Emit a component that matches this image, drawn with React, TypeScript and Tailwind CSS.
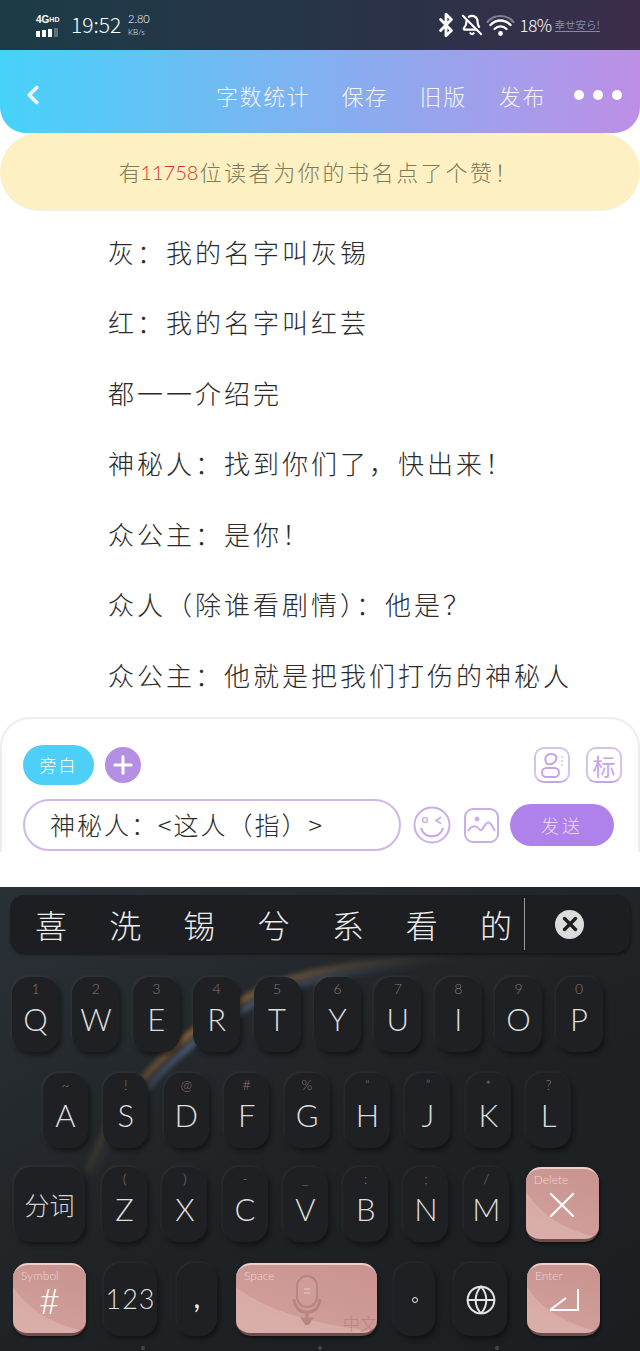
import { ReactNode } from 'react';
import { Bluetooth, BellOff, ChevronLeft, Globe, Plus, X } from 'lucide-react';

const hand = "font-['Noto_Sans_CJK_SC',sans-serif] font-extralight";

const lines = [
  '灰：我的名字叫灰锡',
  '红：我的名字叫红芸',
  '都一一介绍完',
  '神秘人：找到你们了，快出来！',
  '众公主：是你！',
  '众人（除谁看剧情）：他是？',
  '众公主：他就是把我们打伤的神秘人',
];

const candidates = ['喜', '洗', '锡', '兮', '系', '看', '的'];

const row1 = [
  ['Q', '1'], ['W', '2'], ['E', '3'], ['R', '4'], ['T', '5'],
  ['Y', '6'], ['U', '7'], ['I', '8'], ['O', '9'], ['P', '0'],
];
const row2 = [
  ['A', '~'], ['S', '!'], ['D', '@'], ['F', '#'], ['G', '%'],
  ['H', '“'], ['J', '”'], ['K', '*'], ['L', '?'],
];
const row3 = [
  ['Z', '('], ['X', ')'], ['C', '-'], ['V', '_'], ['B', ':'], ['N', ';'], ['M', '/'],
];

function Key({ letter, sub, className, children }: { letter?: string; sub?: string; className: string; children?: ReactNode }) {
  return (
    <div className={`relative shrink-0 h-full flex flex-col items-center rounded-[17px] bg-[#1e2023] shadow-[2px_3px_5px_rgba(0,0,0,0.45),-1px_-1px_3px_rgba(255,255,255,0.07)] ${className}`}>
      {sub !== undefined && <span className="mt-[2px] h-[20px] text-[14px] leading-[20px] font-light text-[#8a7774]">{sub}</span>}
      {letter && <span className="mt-[1px] text-[31px] leading-[38px] font-light text-[#dedede]">{letter}</span>}
      {children}
    </div>
  );
}

function PinkKey({ label, className, children }: { label: string; className: string; children?: ReactNode }) {
  return (
    <div className={`relative shrink-0 h-full overflow-hidden rounded-[15px] bg-[linear-gradient(200deg,#c9938f,#d2a19d)] border-t-2 border-t-[#ecd0cc] border-b-[3px] border-b-[#6d4c4a] shadow-[1px_2px_3px_rgba(0,0,0,0.5)] ${className}`}>
      <svg className="absolute inset-0 w-full h-full" viewBox="0 0 100 100" preserveAspectRatio="none">
        <path d="M0 32 Q30 82 100 98 L100 100 L0 100 Z" fill="#e6c3bf" opacity="0.4" />
      </svg>
      <span className="absolute left-[8px] top-[2px] text-[12px] font-light text-[#ecd6d3]">{label}</span>
      <div className="absolute inset-0 flex items-center justify-center">{children}</div>
    </div>
  );
}

export default function App() {
  return (
    <div className="w-[640px] h-[1351px] overflow-hidden flex flex-col bg-white font-['Lato',sans-serif]">
      {/* status bar */}
      <div className="h-[50px] shrink-0 flex items-center justify-between pl-[36px] pr-[40px] bg-[linear-gradient(90deg,#1c3b47,#2b3248_65%,#3c2d4c)] text-white">
        <div className="flex items-center">
          <div className="w-[27px]">
            <div className="text-[10px] leading-[11px] font-bold font-['Liberation_Sans',sans-serif] whitespace-nowrap">4G<span className="text-[7px] align-top">HD</span></div>
            <div className="flex items-end gap-[2px] mt-[3px] h-[9px]">
              <div className="w-[4px] h-[6px] bg-white" />
              <div className="w-[4px] h-[7px] bg-white" />
              <div className="w-[4px] h-[8px] bg-white" />
              <div className="w-[4px] h-[9px] bg-[#5d7177]" />
            </div>
          </div>
          <span className={`ml-[8px] w-[49px] text-[21px] ${hand}`}>19:52</span>
          <div className="ml-[8px] flex flex-col items-start">
            <span className="text-[11px] leading-[14px] font-light">2.80</span>
            <span className="text-[8px] leading-[12px] font-light">KB/s</span>
          </div>
        </div>
        <div className="flex items-center">
          <Bluetooth className="w-[26px] h-[26px]" strokeWidth={2.6} />
          <BellOff className="ml-[2px] w-[22px] h-[22px]" strokeWidth={2.4} />
          <svg className="ml-[3px]" width="29" height="24" viewBox="0 0 29 24" fill="none" stroke="white" strokeLinecap="round">
            <path d="M1.5 9 C8 1 21 1 27.5 9" strokeWidth="2" stroke="#7f8294" />
            <path d="M4.5 12 C10 6 19 6 24.5 12" strokeWidth="2.4" />
            <path d="M8.5 16 C12 12.5 17 12.5 20.5 16" strokeWidth="2.4" />
            <circle cx="14.5" cy="20.5" r="2.4" fill="white" stroke="none" />
          </svg>
          <span className={`ml-[5px] w-[29px] text-[17px] tracking-[-0.5px] whitespace-nowrap ${hand}`}>18%</span>
          <span className="ml-[6px] text-[10.5px] leading-[13px] text-[#858aa5] border-b border-[#858aa5] font-['Noto_Sans_CJK_JP',sans-serif] whitespace-nowrap">幸せ安ら!</span>
        </div>
      </div>

      {/* title bar */}
      <div className="h-[83px] shrink-0 pt-[7px] flex items-center rounded-b-[26px] bg-[linear-gradient(90deg,#47d2f9,#90a8ee_62%,#bd8fe6)] text-[#f1f4ff]">
        <ChevronLeft className="ml-[18px] w-[30px] h-[30px]" strokeWidth={3} />
        <div className={`ml-auto flex items-center text-[22px] tracking-[1.6px] whitespace-nowrap ${hand}`}>
          <span>字数统计</span>
          <span className="ml-[31px]">保存</span>
          <span className="ml-[31px]">旧版</span>
          <span className="ml-[32px]">发布</span>
        </div>
        <div className="ml-[28px] mr-[18px] flex gap-[9px]">
          <div className="w-[10px] h-[10px] rounded-full bg-white" />
          <div className="w-[10px] h-[10px] rounded-full bg-white" />
          <div className="w-[10px] h-[10px] rounded-full bg-white" />
        </div>
      </div>

      {/* like banner */}
      <div className={`h-[78px] shrink-0 pr-[2px] flex items-center justify-center rounded-[40px] bg-[#fdf0c3] border-b border-[#efefef] text-[22px] tracking-[2.6px] text-[#7e7a5a] whitespace-nowrap ${hand}`}>
        有<span className="ml-[-3px] mr-[1px] text-[20px] text-[#d8332f] tracking-normal font-light font-['Lato',sans-serif]">11758</span>位读者为你的书名点了个赞！
      </div>

      {/* script lines */}
      <div className="flex-1 pt-[5px] pl-[108px]">
        {lines.map((line) => (
          <div key={line} className={`h-[70.5px] flex items-center text-[26px] tracking-[3px] text-[#2b2b2b] whitespace-nowrap ${hand}`}>
            {line}
          </div>
        ))}
      </div>

      {/* composer */}
      <div className="h-[135px] shrink-0 overflow-hidden rounded-t-[30px] border-t-2 border-x-2 border-[#ececf1] px-[21px] pt-[26px]">
        <div className="h-[40px] flex items-center">
          <div className={`w-[71px] h-[40px] rounded-full bg-[#4dcff7] text-white text-[17px] tracking-[2px] flex items-center justify-center ${hand}`}>旁白</div>
          <div className="ml-[11px] w-[36px] h-[36px] rounded-full bg-[#b58fe3] text-white flex items-center justify-center">
            <Plus className="w-[28px] h-[28px]" strokeWidth={2.6} />
          </div>
          <div className="ml-auto mr-[-5px] flex gap-[16px]">
            <div className="w-[36px] h-[36px] rounded-[10px] border-2 border-[#d6c2ee] border-b-[#c3a5e8] flex items-center justify-center">
              <svg width="26" height="28" viewBox="0 0 26 28" fill="none" stroke="#c3a5e8" strokeWidth="2">
                <path d="M8 13 C5 9 6 3 12 3 C17 3 18 6 17 9 C16 12 12 14 8 13 Z" />
                <rect x="3" y="17" width="17" height="9" rx="4.5" />
                <path d="M22 6h2M22 10h2M22 14h2" strokeWidth="1.2" />
              </svg>
            </div>
            <div className="w-[36px] h-[36px] rounded-[10px] border-2 border-[#d6c2ee] border-b-[#c3a5e8] flex items-center justify-center text-[23px] text-[#c3a5e8] font-['Noto_Sans_CJK_SC',sans-serif]">标</div>
          </div>
        </div>
        <div className="mt-[14px] flex items-center">
          <div className={`w-[378px] h-[52px] shrink-0 rounded-[26px] border-2 border-[#cfb8e8] pl-[25px] flex items-center text-[25px] tracking-[2px] text-[#2b2b2b] whitespace-nowrap ${hand}`}>神秘人：&lt;这人（指）&gt;</div>
          <svg className="ml-[12px] shrink-0" width="38" height="38" viewBox="0 0 38 38" fill="none" stroke="#c9aeea" strokeWidth="2">
            <circle cx="19" cy="19" r="17.5" />
            <circle cx="12" cy="14" r="2.4" strokeWidth="1.4" />
            <path d="M28 11 L23 14.5 L28 17.5" strokeWidth="1.6" />
            <path d="M8 22 C11 33 27 33 30 22" strokeWidth="2.4" />
          </svg>
          <svg className="ml-[13px] shrink-0" width="35" height="35" viewBox="0 0 35 35" fill="none" stroke="#c9aeea" strokeWidth="2">
            <rect x="1" y="1" width="33" height="33" rx="8" />
            <circle cx="13" cy="11" r="2.4" fill="#c9aeea" stroke="none" />
            <path d="M4 23 C8 17 12 17 15 21 C18 25 19 18 23 15 C26 13 28 18 31 23" />
          </svg>
          <div className={`ml-[11px] w-[104px] h-[42px] shrink-0 rounded-full bg-[#ae82ea] text-[#eadcf8] text-[18px] tracking-[3px] flex items-center justify-center ${hand}`}>发送</div>
        </div>
      </div>
      <div className="h-[35px] shrink-0 bg-white" />

      {/* keyboard */}
      <div className="relative h-[464px] shrink-0 overflow-hidden flex flex-col bg-[linear-gradient(150deg,#2a3136,#1f2225_55%,#1b1e21)]">
        <svg className="absolute left-0 top-[60px] blur-[2.5px]" width="640" height="340" viewBox="0 0 640 340" fill="none">
          <defs>
            <linearGradient id="warm" x1="85" y1="0" x2="460" y2="0" gradientUnits="userSpaceOnUse">
              <stop offset="0" stopColor="#6b5530" stopOpacity="0.25" />
              <stop offset="0.3" stopColor="#a8743e" stopOpacity="0.8" />
              <stop offset="0.6" stopColor="#8a6a45" stopOpacity="0.55" />
              <stop offset="1" stopColor="#5a4a38" stopOpacity="0" />
            </linearGradient>
            <linearGradient id="cool" x1="85" y1="0" x2="420" y2="0" gradientUnits="userSpaceOnUse">
              <stop offset="0" stopColor="#4a5a70" stopOpacity="0" />
              <stop offset="0.35" stopColor="#64789e" stopOpacity="0.75" />
              <stop offset="0.6" stopColor="#64789e" stopOpacity="0.4" />
              <stop offset="1" stopColor="#64789e" stopOpacity="0" />
            </linearGradient>
          </defs>
          <path d="M88 225 C112 150 190 65 294 31 C340 18 400 12 460 12" stroke="url(#warm)" strokeWidth="7" />
          <path d="M95 228 C120 156 198 72 298 38 C340 26 380 21 420 20" stroke="url(#cool)" strokeWidth="6" />
        </svg>

        <div className="relative mt-[8px] mx-[10px] h-[58px] shrink-0 flex items-center rounded-[14px] bg-[#1c1e21] shadow-[1px_2px_3px_rgba(0,0,0,0.4)] text-[#ececec]">
          <div className={`w-[515px] h-[52px] flex items-center justify-between pl-[25px] pr-[12px] border-r border-[#9a9a9a] text-[32px] ${hand}`}>
            {candidates.map((c) => <span key={c}>{c}</span>)}
          </div>
          <div className="ml-[30px] w-[29px] h-[29px] rounded-full bg-[#dcdcdc] flex items-center justify-center text-[#1c1e21]">
            <X className="w-[22px] h-[22px]" strokeWidth={3.6} />
          </div>
        </div>

        <div className="relative mt-[24px] h-[75px] shrink-0 pl-[12px] flex gap-[13.4px]">
          {row1.map(([l, s]) => <Key key={l} letter={l} sub={s} className="w-[47px]" />)}
        </div>

        <div className="relative mt-[21px] h-[75px] shrink-0 pl-[43px] flex gap-[15.4px]">
          {row2.map(([l, s]) => <Key key={l} letter={l} sub={s} className="w-[45px]" />)}
        </div>

        <div className="relative mt-[19px] h-[75px] shrink-0 pl-[14px] flex">
          <Key className="w-[71px] justify-center">
            <span className="text-[25px] text-[#d4d4d4] font-['Noto_Sans_CJK_SC',sans-serif] font-extralight">分词</span>
          </Key>
          <div className="ml-[17px] flex gap-[15.3px] h-full">
            {row3.map(([l, s]) => <Key key={l} letter={l} sub={s} className="w-[45px]" />)}
          </div>
          <PinkKey label="Delete" className="ml-[17px] w-[73px]">
            <X className="w-[44px] h-[44px] mt-[2px] text-white" strokeWidth={1.2} />
          </PinkKey>
        </div>

        <div className="relative mt-[21px] h-[73px] shrink-0 pl-[13px] flex">
          <PinkKey label="Symbol" className="w-[73px]">
            <span className="mt-[2px] text-[36px] leading-[28px] font-light text-white">#</span>
          </PinkKey>
          <Key className="ml-[18px] w-[53px] justify-center">
            <span className="text-[27px] font-light text-[#dedede] tracking-[1px]">123</span>
          </Key>
          <Key className="ml-[20px] w-[40px] justify-center">
            <span className="text-[30px] leading-[30px] mb-[8px] text-[#ececec]">,</span>
          </Key>
          <PinkKey label="Space" className="ml-[19px] w-[141px]">
            <svg width="30" height="50" viewBox="0 0 30 50" fill="none" className="mt-[2px]">
              <rect x="5" y="1" width="20" height="31" rx="10" fill="#cf9d99" stroke="#b98580" strokeWidth="2" />
              <path d="M12 14h6M12 18h6" stroke="#e0bcb8" strokeWidth="1.4" />
              <path d="M2 24 C3 42 27 42 28 24" stroke="#b98580" strokeWidth="3" />
              <path d="M15 38 V45 M11 44 L15 50 L19 44 Z" stroke="#b98580" strokeWidth="3" fill="#b98580" />
            </svg>
            <span className="absolute right-0 bottom-[-2px] text-[17px] text-[#b98480] font-['Noto_Sans_CJK_SC',sans-serif] font-light">中文</span>
          </PinkKey>
          <Key className="ml-[17px] w-[41px] justify-center">
            <span className="w-[6px] h-[6px] rounded-full border border-[#ececec]" />
          </Key>
          <Key className="ml-[19px] w-[53px] justify-center">
            <Globe className="w-[32px] h-[32px] text-[#e4e4e4]" strokeWidth={1.5} />
          </Key>
          <PinkKey label="Enter" className="ml-[20px] w-[73px]">
            <svg width="32" height="24" viewBox="0 0 32 24" fill="none" stroke="white" strokeWidth="2" className="mt-[2px]">
              <path d="M30 1 V22 H2 M2 22 L18 10" />
            </svg>
          </PinkKey>
        </div>

        <div className="relative mt-[10px] flex justify-between pl-[141px] pr-[141px]">
          <div className="w-[4px] h-[4px] rounded-full bg-[#44474b]" />
          <div className="w-[4px] h-[4px] rounded-full bg-[#44474b]" />
          <div className="w-[4px] h-[4px] rounded-full bg-[#44474b]" />
        </div>
      </div>
    </div>
  );
}
